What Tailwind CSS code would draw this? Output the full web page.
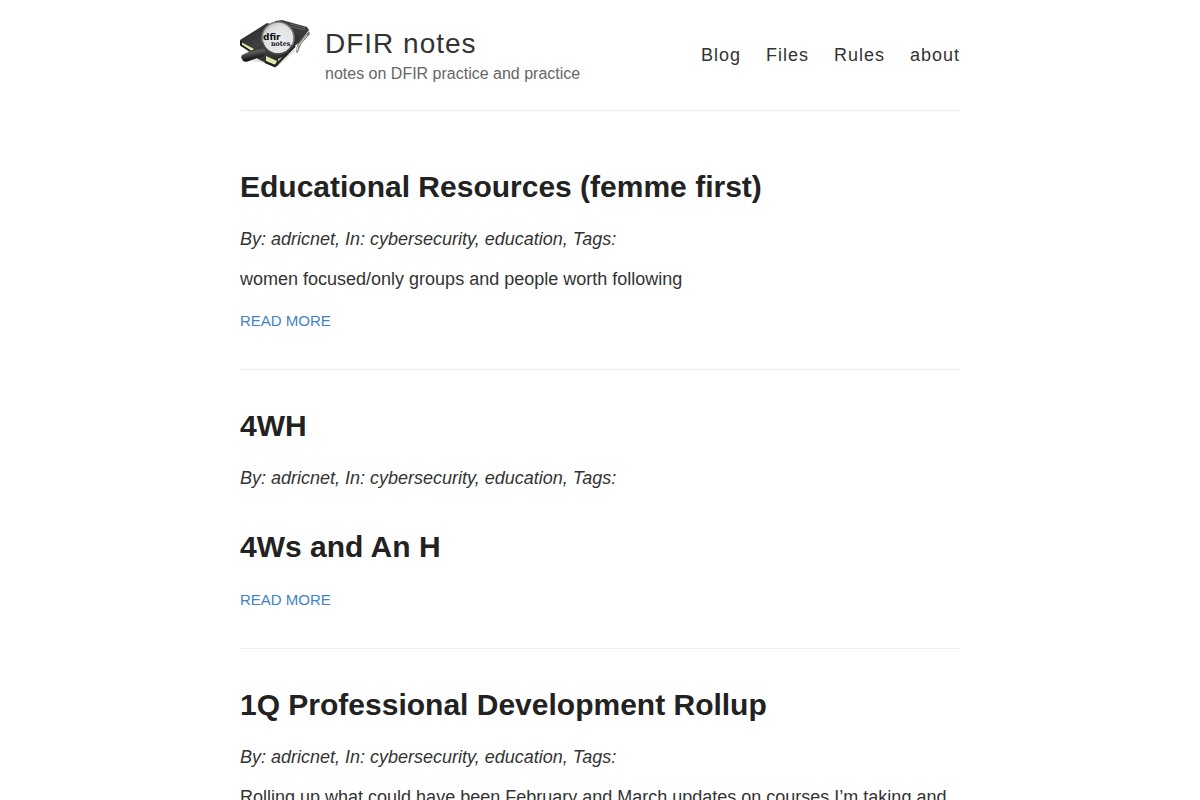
<!DOCTYPE html>
<html lang="en">
<head>
    <meta charset="UTF-8">
    <meta name="viewport" content="width=device-width, initial-scale=1.0">
    <title>DFIR notes</title>
    <script src="https://cdn.jsdelivr.net/npm/@tailwindcss/browser@4"></script>
</head>
<body class="bg-white font-['Liberation_Sans',Arial,sans-serif] text-[18px] leading-[25px] text-[#333]">
    <header class="max-w-[720px] mx-auto py-5 border-b border-[#eee] flex items-center">
        <a href="#" class="shrink-0 mr-[15px]" aria-label="DFIR notes home">
            <svg class="size-[70px]" viewBox="0 0 70 70" aria-hidden="true">
                <defs>
                    <linearGradient id="cover" x1="0" y1="0" x2="1" y2="1">
                        <stop offset="0" stop-color="#222"/>
                        <stop offset=".4" stop-color="#404040"/>
                        <stop offset="1" stop-color="#1c1c1c"/>
                    </linearGradient>
                    <linearGradient id="handle" x1=".3" y1="0" x2=".6" y2="1">
                        <stop offset=".1" stop-color="#222"/>
                        <stop offset=".4" stop-color="#5c5c5c"/>
                        <stop offset=".75" stop-color="#1a1a1a"/>
                    </linearGradient>
                    <radialGradient id="glass" cx=".6" cy=".6" r=".6">
                        <stop offset="0" stop-color="#eceef0"/>
                        <stop offset=".8" stop-color="#dfe1e3"/>
                        <stop offset="1" stop-color="#c6c8ca"/>
                    </radialGradient>
                </defs>
                <!-- back book -->
                <path d="M6 42l5-1 13 2 12 5 20-18-18-4z" fill="#bbb" opacity=".4"/>
                <path d="M35 1l7-1 25 7 2 3-10 13-5 3-14 4z" fill="#3b3b3b"/>
                <path d="M69 11l1 3-9 10-3 8-2 1 1-8z" fill="#777"/>
                <path d="M67 15l-9 11-1 5" fill="none" stroke="#ddd"/>
                <path d="M50 4l15 4M48 6l17 4" fill="none" stroke="#666"/>
                <!-- front book with page edges -->
                <path d="M0 20L27 3l34 12-6 11-18 20-3 1-16-8L1 24z" fill="url(#cover)"/>
                <path d="M1 22l13 7-2 2L2 26zM26 36l11 5-2 4-9-4z" fill="#e4e6a8"/>
                <path d="M38 39l12-5-12 10z" fill="#c4c8a4"/>
                <path d="M1 21v4l9 6M25 42l10 4 20-20" fill="none" stroke="#222" stroke-width="2"/>
                <!-- magnifier -->
                <path d="M21 26l6 6-4 4L6 42l-3-1-2-4 1-2z" fill="url(#handle)"/>
                <circle cx="38" cy="18" r="16" fill="url(#glass)" stroke="#777" stroke-width="1.5"/>
                <path d="M22 22q4 12 16 12 10 0 14-9" fill="none" stroke="#444" stroke-width="1.5"/>
                <text x="23" y="20" font-family="'DejaVu Sans', sans-serif" font-weight="700" font-size="9" fill="#111">dfir</text>
                <text x="31" y="26" font-family="'DejaVu Serif Condensed', 'DejaVu Serif', serif" font-weight="700" font-size="7" fill="#111">notes</text>
            </svg>
        </a>
        <div class="grow pt-0.5">
            <h1 class="text-[28px] leading-9 tracking-[1px]"><a href="#">DFIR notes</a></h1>
            <p class="text-base leading-6 text-[#666]">notes on DFIR practice and practice</p>
        </div>
        <nav class="flex gap-[25px] tracking-[1px]">
            <a href="#">Blog</a>
            <a href="#">Files</a>
            <a href="#">Rules</a>
            <a href="#">about</a>
        </nav>
    </header>

    <main class="max-w-[720px] mx-auto pt-5">
        <article class="pt-9 pb-9 border-b border-[#eee]">
            <h2 class="text-[30px] leading-10 font-bold text-[#222] mb-5"><a href="#">Educational Resources (femme first)</a></h2>
            <p class="italic mb-[15px]">By: adricnet, In: cybersecurity, education, Tags:</p>
            <p class="mb-4">women focused/only groups and people worth following</p>
            <a href="#" class="block text-[15px] leading-[25px] uppercase text-[#4183c4]">Read More</a>
        </article>

        <article class="pt-9 pb-9 border-b border-[#eee]">
            <h2 class="text-[30px] leading-10 font-bold text-[#222] mb-5"><a href="#">4WH</a></h2>
            <p class="italic">By: adricnet, In: cybersecurity, education, Tags:</p>
            <h2 class="text-[30px] leading-10 font-bold text-[#222] mt-9 mb-5">4Ws and An H</h2>
            <a href="#" class="block text-[15px] leading-[25px] uppercase text-[#4183c4]">Read More</a>
        </article>

        <article class="pt-9 pb-9 border-b border-[#eee]">
            <h2 class="text-[30px] leading-10 font-bold text-[#222] mb-5"><a href="#">1Q Professional Development Rollup</a></h2>
            <p class="italic mb-[15px]">By: adricnet, In: cybersecurity, education, Tags:</p>
            <p class="mb-4">Rolling up what could have been February and March updates on courses I’m taking and</p>
            <a href="#" class="block text-[15px] leading-[25px] uppercase text-[#4183c4]">Read More</a>
        </article>
    </main>
</body>
</html>
